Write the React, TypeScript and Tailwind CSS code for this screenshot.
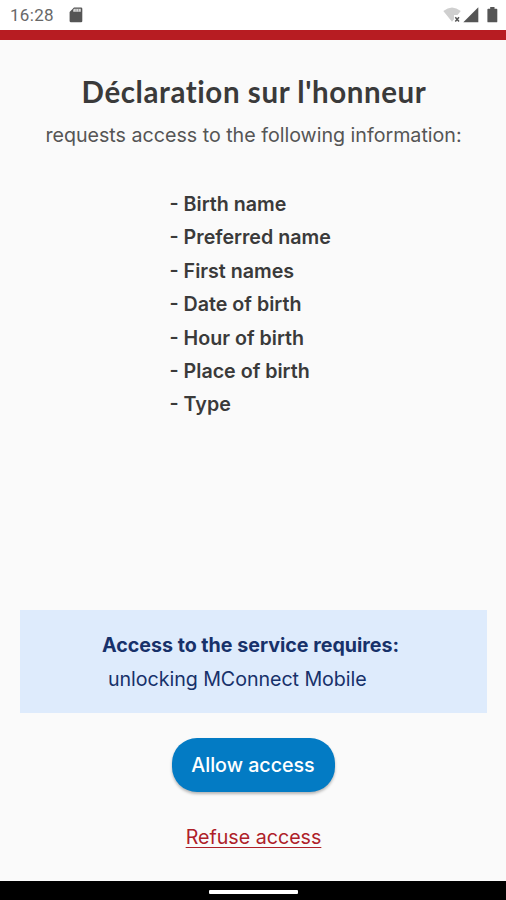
const fields = [
  'Birth name',
  'Preferred name',
  'First names',
  'Date of birth',
  'Hour of birth',
  'Place of birth',
  'Type',
];

function StatusBar() {
  return (
    <div className="flex h-[30px] shrink-0 items-center bg-white pr-[8px] pl-[10px]">
      <span className="font-['Roboto',sans-serif] text-[17px] leading-[30px] tracking-[0.3px] text-[#686868]">16:28</span>
      <svg className="ml-[15px]" width="14" height="16" viewBox="0 0 14 16">
        <path d="M5 0.5H12Q13.3 0.5 13.3 1.8V14Q13.3 15.3 12 15.3H2Q0.6 15.3 0.6 14V5Z" fill="#555" />
        <path d="M5.2 1.7H11.8V4.7H4.2V2.8Z" fill="#d8d8d8" />
        <path d="M7 2V4.7M9.5 2V4.7" stroke="#999" strokeWidth="0.8" />
      </svg>
      <div className="ml-auto flex items-center">
        <svg width="18" height="16" viewBox="0 0 18 16">
          <path d="M0.3 4Q9 -3 17.8 4L14.5 8H11V12.2L9 14.8Z" fill="#cfcfcf" />
          <path d="M12.3 10.3L16 14.4M16 10.3L12.3 14.4" stroke="#555" strokeWidth="1.5" />
        </svg>
        <svg className="ml-[2px]" width="16" height="16" viewBox="0 0 16 16">
          <path d="M15.3 0.2V15.2H0.3Z" fill="#555" />
        </svg>
        <svg className="ml-[8px]" width="11" height="16" viewBox="0 0 11 16">
          <path d="M3.2 0H7.5V1.7H9.5Q10.3 1.7 10.3 2.5V14.4Q10.3 15.3 9.5 15.3H1.2Q0.4 15.3 0.4 14.4V2.5Q0.4 1.7 1.2 1.7H3.2Z" fill="#555" />
        </svg>
      </div>
    </div>
  );
}

export default function App() {
  return (
    <div className="flex h-[900px] w-[506px] flex-col overflow-hidden bg-[#fafafa] font-['Inter',sans-serif] text-[19.65px]">
      <StatusBar />
      <div className="h-[10px] shrink-0 bg-[#b71c22]" />
      <main className="flex grow flex-col items-center">
        <h1 className="mt-[33px] ml-[2px] font-['Lato',sans-serif] text-[29.5px] leading-[38px] font-bold tracking-[0.58px] whitespace-nowrap text-[#3a3a3a]">
          Déclaration sur l'honneur
        </h1>
        <p className="mt-[9px] ml-px leading-[30px] whitespace-nowrap text-[#555]">
          requests access to the following information:
        </p>
        <ul className="mt-[38px] w-[167px] font-semibold whitespace-nowrap text-[#3a3a3a]">
          {fields.map((field) => (
            <li key={field} className="h-[33.4px] leading-[33.4px]">
              - {field}
            </li>
          ))}
        </ul>
        <section className="mt-auto ml-[1px] flex h-[103px] w-[467px] flex-col items-center bg-[#deebfc] pt-[18px] text-[#17316a]">
          <div className="w-[303px] whitespace-nowrap">
            <h2 className="leading-[34px] font-bold">Access to the service requires:</h2>
            <p className="ml-[6px] leading-[34px] tracking-[-0.05px]">unlocking MConnect Mobile</p>
          </div>
        </section>
        <button className="mt-[25px] h-[54px] w-[163px] rounded-[25px] bg-[#037bc4] pt-[2px] font-medium whitespace-nowrap text-white shadow-[0_2px_3px_rgba(0,0,0,0.28)]">
          Allow access
        </button>
        <a className="mt-[30px] mb-[29px] ml-px h-[30px] leading-[30px] whitespace-nowrap text-[#ae2028] underline decoration-1 underline-offset-3">
          Refuse access
        </a>
      </main>
      <div className="flex h-[19px] shrink-0 justify-center bg-black pt-[9px]">
        <div className="h-[4px] w-[89px] rounded-[1px] bg-white" />
      </div>
    </div>
  );
}
